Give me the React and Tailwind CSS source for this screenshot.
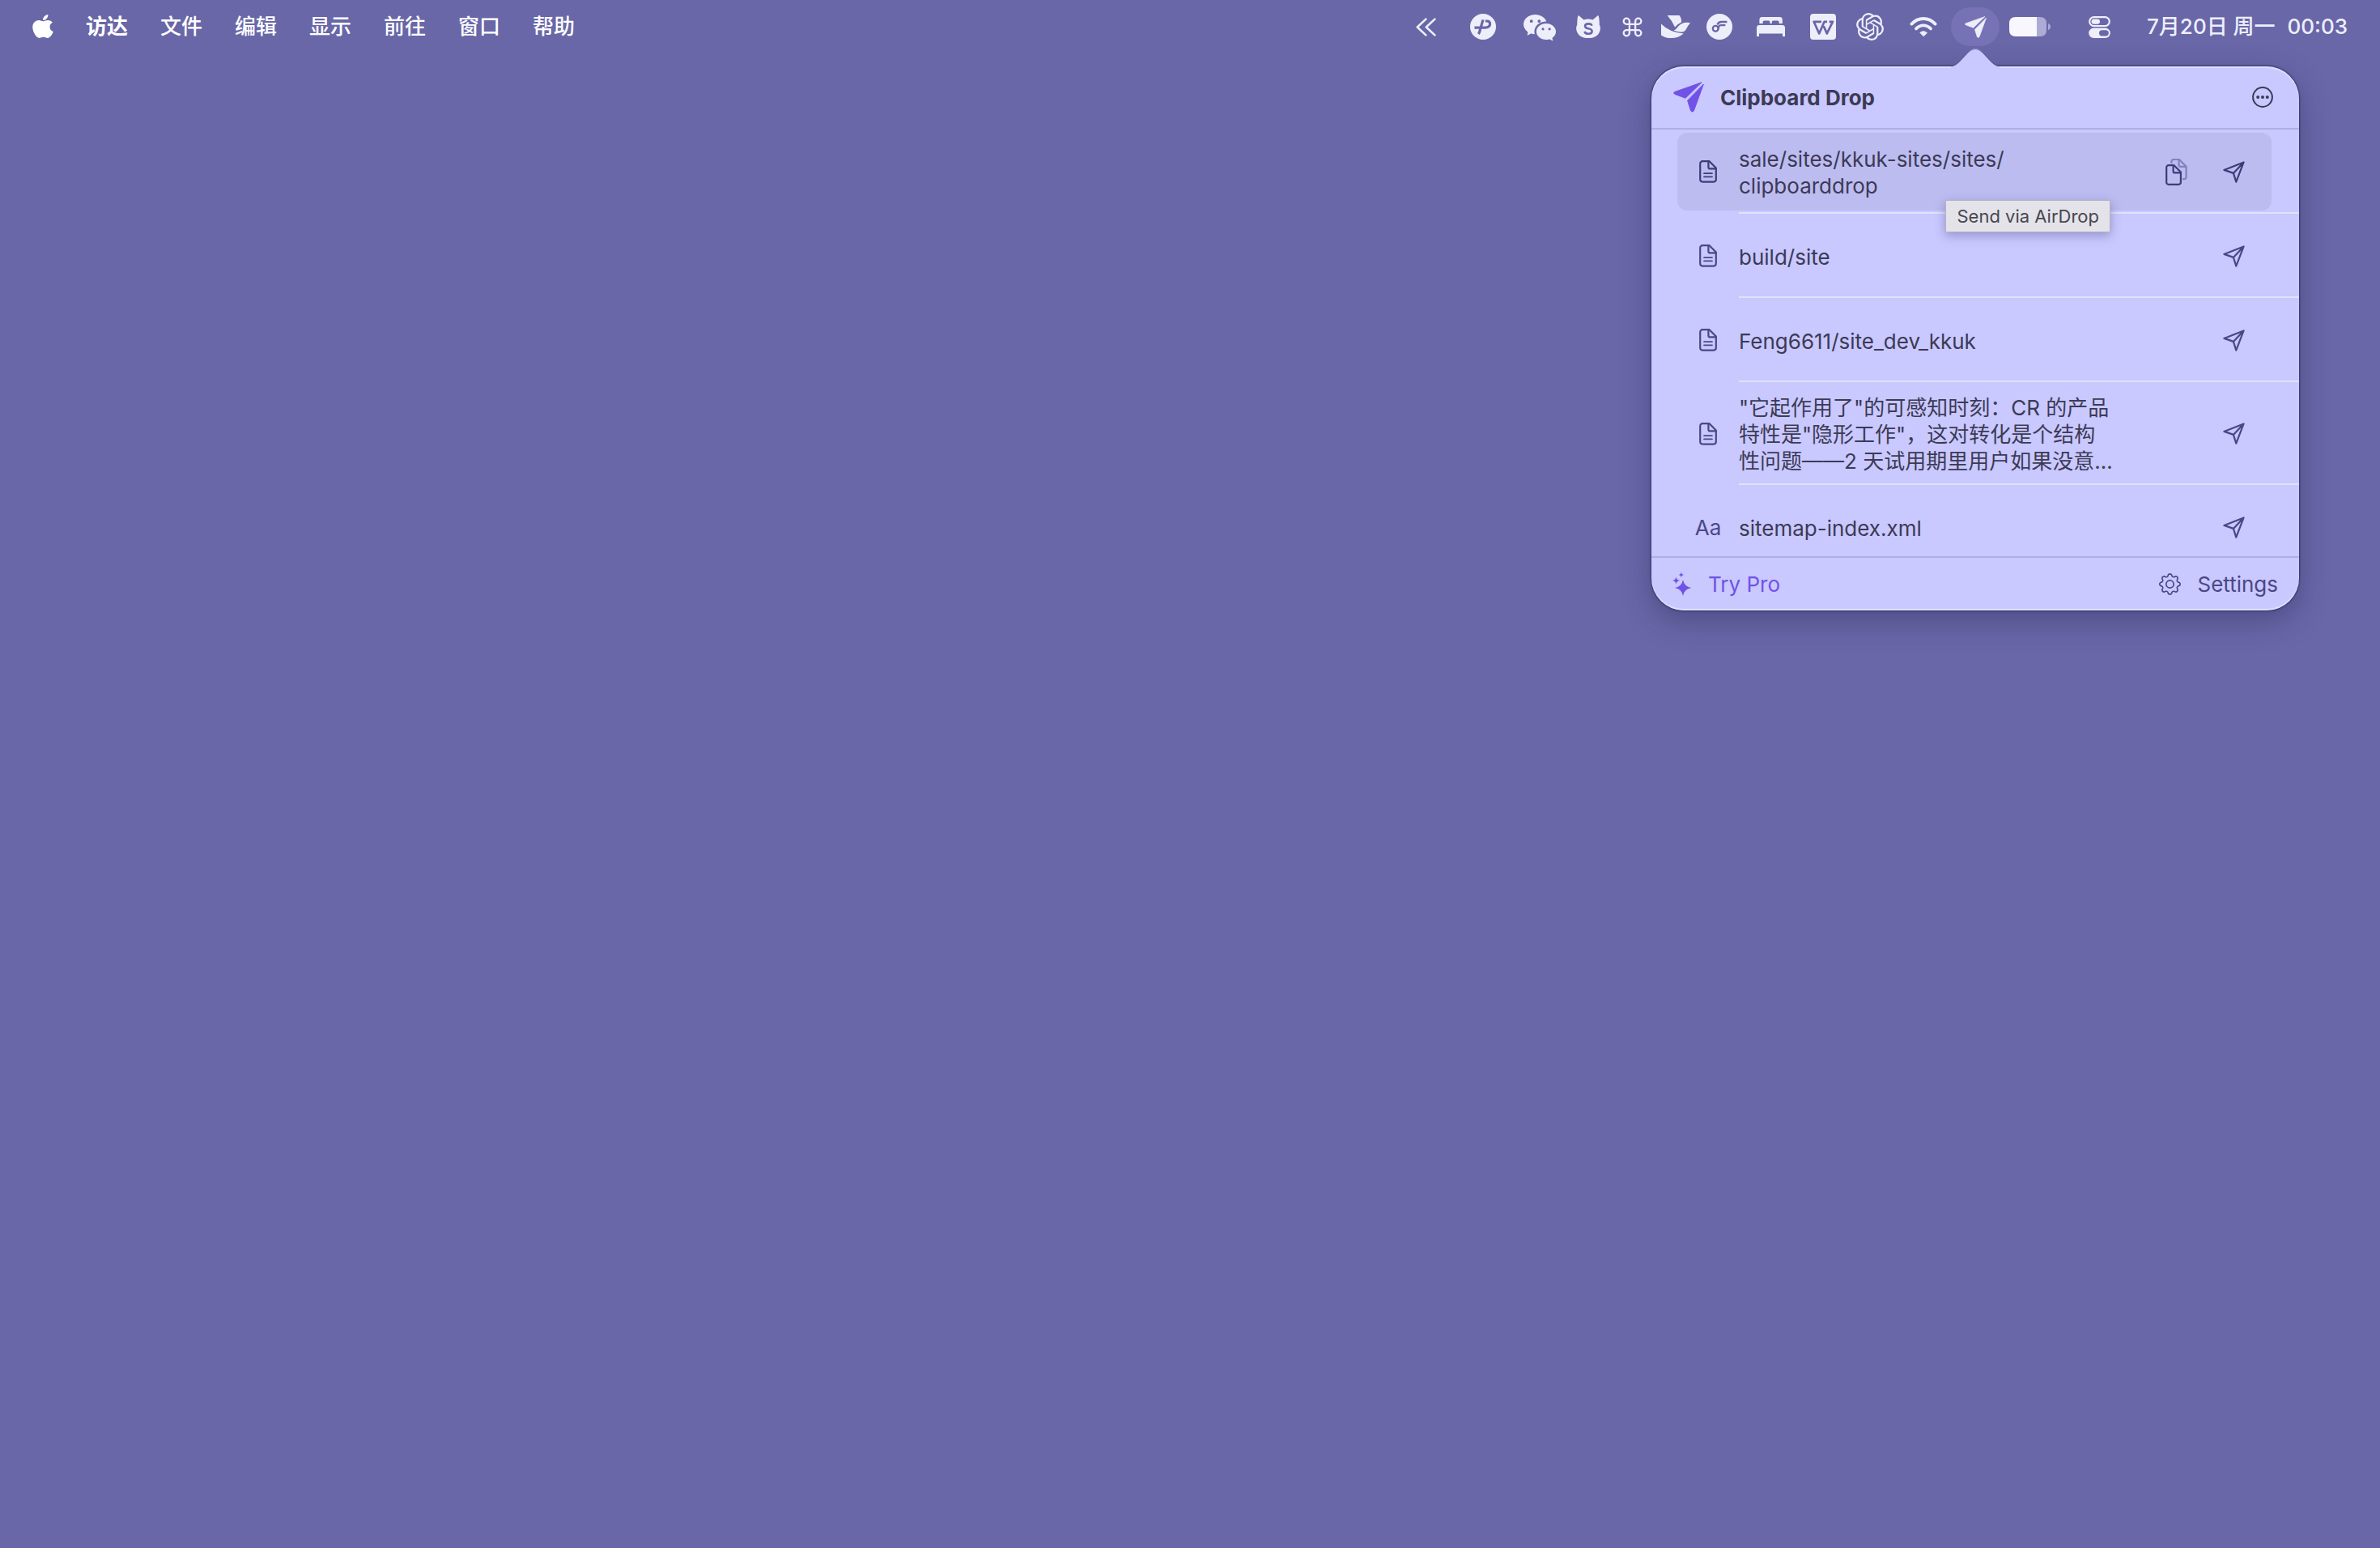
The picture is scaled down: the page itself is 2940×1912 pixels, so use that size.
import { Command } from 'lucide-react';
import { BsGear, BsWechat } from 'react-icons/bs';
import { FaApple } from 'react-icons/fa';
import { SiOpenai } from 'react-icons/si';

/* ── Icons ─────────────────────────────────────── */

const PlaneFill = ({ className }) => (
  <svg viewBox="0 0 38 38" className={className} fill="currentColor" stroke="currentColor" strokeLinejoin="round">
    <path d="M1.6 12.6 35 .8 15 20.2 1.9 15.3Q-.6 14 1.6 12.6Z" />
    <path d="M37.3 3 25.4 35.8Q23.6 38.6 21.6 35.8L17.6 23.2Z" />
  </svg>
);

const Plane = () => (
  <svg viewBox="0 0 27 27" className="w-[27px] h-[27px]" fill="none" stroke="currentColor" strokeWidth="2.2" strokeLinejoin="round">
    <path d="M1.4 10.9 25.6 1.4 16.3 25.6 12.9 14.9Z M12.9 14.9 25.6 1.4" />
  </svg>
);

const Doc = () => (
  <svg viewBox="0 0 22 28" className="w-[22px] h-7" fill="none" stroke="currentColor" strokeWidth="2.2" strokeLinecap="round" strokeLinejoin="round">
    <path d="M4.2 1.2H12.6L20.8 9.6V23.6a3 3 0 0 1-3 3H4.2a3 3 0 0 1-3-3V4.2a3 3 0 0 1 3-3Z" />
    <path d="M11.4 1.6V8.4a2 2 0 0 0 2 2H20.4" />
    <path d="M6 16.2H16M6 20.4H16" strokeWidth="1.7" />
  </svg>
);

const Copy = () => (
  <svg viewBox="0 0 27 33" className="w-[27px] h-[33px]" fill="none" stroke="currentColor" strokeWidth="2.2" strokeLinejoin="round">
    <g opacity="0.45">
      <path d="M7.4 6V3.6a2.6 2.6 0 0 1 2.6-2.6H17L25.6 9.8V22.6a2.6 2.6 0 0 1-2.6 2.6H21" />
      <path d="M16.6 1.4V7.8a2 2 0 0 0 2 2H25.2" />
    </g>
    <path d="M3.8 8.2H10.6L18.9 16.6V29.2a2.6 2.6 0 0 1-2.6 2.6H3.8a2.6 2.6 0 0 1-2.6-2.6V10.8a2.6 2.6 0 0 1 2.6-2.6Z" />
    <path d="M9.6 8.6V15.4a2 2 0 0 0 2 2H18.6" />
  </svg>
);

const More = () => (
  <svg viewBox="0 0 26 26" className="w-[26px] h-[26px]">
    <circle cx="13" cy="13" r="11.9" fill="none" stroke="currentColor" strokeWidth="2" />
    <circle cx="7.2" cy="13" r="2" fill="currentColor" />
    <circle cx="13" cy="13" r="2" fill="currentColor" />
    <circle cx="18.8" cy="13" r="2" fill="currentColor" />
  </svg>
);

const Sparkles = () => (
  <svg viewBox="0 0 24 29" className="w-6 h-[29px]" fill="currentColor">
    <path d="M13 9Q14.4 17.6 23.4 19 14.4 20.4 13 29 11.6 20.4 2.8 19 11.6 17.6 13 9Z" />
    <path d="M4.4 5.4Q5 9.4 9.2 10 5 10.6 4.4 14.6 3.8 10.6 0 10 3.8 9.4 4.4 5.4Z" />
    <path d="M10.8 0Q11.2 2.6 13.8 3 11.2 3.4 10.8 6 10.4 3.4 7.8 3 10.4 2.6 10.8 0Z" />
  </svg>
);

const Chevrons = () => (
  <svg viewBox="0 0 25 23" className="w-[25px] h-[23px]" fill="none" stroke="currentColor" strokeWidth="2.6" strokeLinecap="round" strokeLinejoin="round">
    <path d="M12.4 1.6 1.8 11.5 12.4 21.4M23.4 1.6 12.8 11.5 23.4 21.4" />
  </svg>
);

const PassLogo = () => (
  <svg viewBox="0 0 32 32" className="w-8 h-8">
    <circle cx="16" cy="16" r="16" fill="currentColor" />
    <g fill="none" stroke="#6967a8" strokeWidth="3.2" strokeLinejoin="round">
      <path d="M16 7.4 12.4 19.6Q11.8 23 10.4 25M5.4 17.2H19.2Q24.6 16.6 24.6 12.6 24.6 9 20.6 9H18.8" />
    </g>
  </svg>
);

const CatLogo = () => (
  <svg viewBox="0 0 30 28" className="w-[30px] h-7">
    <path d="M3 0 9.5 5.4Q15 3.8 20.5 5.4L27 0Q28.6 0 28.8 12 30 13 29.8 17.4 27.6 28 15 28 2.4 28 .2 17.4 0 13 1.2 12 1.4 0 3 0Z" fill="currentColor" />
    <path d="M19.4 12.8Q18.8 10.4 15.2 10.4 11 10.4 11 13.2 11 15.6 15 16.2 19.6 17 19.6 19.6 19.6 22.8 15.2 22.8 11.2 22.8 10.4 19.8" fill="none" stroke="#6967a8" strokeWidth="2.6" />
  </svg>
);

const BirdLogo = () => (
  <svg viewBox="0 0 36 28" className="w-9 h-7" fill="currentColor">
    <path d="M7.6 0H22.4Q25.4 3.6 25 8.4 21 10 17 14.6 13.6 6.6 7.6 0Z" />
    <path d="M36 9.2Q32.4 13.4 30.6 17.4 27 23 15.8 18.8 18.4 17.4 21.2 13.6 26.4 7.4 36 9.2Z" />
    <path d="M0 10.6Q10.6 21.4 27.8 22.4 21 28 12.6 28 5 28 0 24.4Z" />
  </svg>
);

const FlashLogo = () => (
  <svg viewBox="0 0 32 32" className="w-8 h-8">
    <circle cx="16" cy="16" r="16" fill="currentColor" />
    <g fill="none" stroke="#6967a8" strokeWidth="2.3">
      <circle cx="11.2" cy="18.2" r="3.4" />
      <path d="M14.6 19.4Q14.4 14.2 18 14.2H23.4M13.4 13.4Q15 10 18.4 10H25.4" />
    </g>
  </svg>
);

const Bed = () => (
  <svg viewBox="0 0 35 24" className="w-[35px] h-6" fill="currentColor">
    <path d="M3.4 8V3.4Q3.4 0 6.8 0H28.4Q31.8 0 31.8 3.4V8H27.6V6.2Q27.6 4.6 26 4.6H20.4Q18.8 4.6 18.8 6.2V8H16.4V6.2Q16.4 4.6 14.8 4.6H9.2Q7.6 4.6 7.6 6.2V8Z" />
    <path d="M0 24V13.4Q0 10 3.4 10H31.6Q35 10 35 13.4V24H32V20.6H3V24Z" />
  </svg>
);

const WpsLogo = () => (
  <svg viewBox="0 0 32 32" className="w-8 h-8">
    <rect width="32" height="32" rx="4" fill="currentColor" />
    <path d="M14 9.8H4.6L11.2 24.4 17.6 9.8H21M16.8 15.4 20.8 24.4 28 9.8H23.6" fill="none" stroke="#6967a8" strokeWidth="2.7" strokeLinejoin="round" />
  </svg>
);

const Wifi = () => (
  <svg viewBox="0 0 34 24" className="w-[34px] h-6" fill="none" stroke="currentColor" strokeWidth="3.8" strokeLinecap="round">
    <path d="M2.4 8.6Q8.6 2 17 2T31.6 8.6" />
    <path d="M8 14.4Q12 10.4 17 10.4T26 14.4" />
    <path d="M17 23.6 12.8 19.4Q17 16 21.2 19.4Z" fill="currentColor" strokeWidth="1" strokeLinejoin="round" />
  </svg>
);

const Battery = () => (
  <svg viewBox="0 0 52 24" className="w-[52px] h-6">
    <path d="M34 0H38Q46 0 46 8V16Q46 24 38 24H34Z" fill="#acabd5" />
    <path d="M34 0H8Q0 0 0 8V16Q0 24 8 24H34Z" fill="#f7f7fd" />
    <path d="M48 8Q51 9 51 12T48 16Z" fill="#acabd5" />
  </svg>
);

const ControlCenter = () => (
  <svg viewBox="0 0 27 27" className="w-[27px] h-[27px]">
    <rect x="1.2" y="1.2" width="24.6" height="10.8" rx="5.4" fill="none" stroke="currentColor" strokeWidth="2.2" />
    <rect x="3.6" y="3.4" width="10.4" height="6.4" rx="3.2" fill="currentColor" />
    <path d="M6.4 14.6H20.6A6.2 6.2 0 0 1 20.6 27H6.4A6.2 6.2 0 0 1 6.4 14.6ZM16.6 17.2A3.6 3.6 0 0 0 16.6 24.4H21.2A3.6 3.6 0 0 0 21.2 17.2Z" fill="currentColor" fillRule="evenodd" />
  </svg>
);

/* ── Data ──────────────────────────────────────── */

const menus = ['文件', '编辑', '显示', '前往', '窗口', '帮助'];

const extras = [
  { label: 'Show more', slot: 'w-[66px]', icon: <Chevrons /> },
  { label: 'Passwords', slot: 'w-[76px]', icon: <PassLogo /> },
  { label: 'WeChat', slot: 'w-16', icon: <BsWechat className="w-10 h-10" /> },
  { label: 'Cat', slot: 'w-14', icon: <CatLogo /> },
  { label: 'Command', slot: 'w-[52px]', icon: <Command className="w-[29px] h-[29px]" strokeWidth={1.9} /> },
  { label: 'Lark', slot: 'w-14', icon: <BirdLogo /> },
  { label: 'Flash', slot: 'w-[52px]', icon: <FlashLogo /> },
  { label: 'Sleep', slot: 'w-[75px]', icon: <Bed /> },
  { label: 'WPS', slot: 'w-[54px]', icon: <WpsLogo /> },
  { label: 'ChatGPT', slot: 'w-[62px]', icon: <SiOpenai className="w-[34px] h-[34px]" /> },
  { label: 'Wi-Fi', slot: 'w-[69px]', icon: <Wifi /> },
  { label: 'Clipboard Drop', slot: 'w-[60px] rounded-full bg-[#7772b6]', icon: <PlaneFill className="w-[27px] h-[27px]" /> },
  { label: 'Battery', slot: 'w-[76px]', icon: <Battery /> },
  { label: 'Control Center', slot: 'w-[94px]', icon: <ControlCenter /> },
];

const clips = [
  { kind: 'doc', text: 'sale/sites/kkuk-sites/sites/\nclipboarddrop', active: true },
  { kind: 'doc', text: 'build/site' },
  { kind: 'doc', text: 'Feng6611/site_dev_kkuk' },
  { kind: 'doc', text: '"它起作用了"的可感知时刻：CR 的产品\n特性是"隐形工作"，这对转化是个结构\n性问题——2 天试用期里用户如果没意…' },
  { kind: 'text', text: 'sitemap-index.xml' },
];

/* ── Menu bar ──────────────────────────────────── */

const MenuBar = () => (
  <header className="h-[66px] px-10 flex items-center justify-between text-[#eeeefa]">
    <nav className="flex items-center gap-10 pb-0.5 font-medium text-white">
      <button aria-label="Apple">
        <FaApple className="w-[26px] h-[33px]" preserveAspectRatio="none" />
      </button>
      <button className="font-bold">访达</button>
      {menus.map((m) => (
        <button key={m}>{m}</button>
      ))}
    </nav>

    <div className="flex items-center">
      {extras.map((e) => (
        <button key={e.label} aria-label={e.label} className={`${e.slot} h-12 flex items-center justify-center`}>
          {e.icon}
        </button>
      ))}
      <button className="w-[260px] pl-3 pb-0.5 flex justify-between font-medium whitespace-nowrap">
        <span>7月20日 周一</span>
        <span>00:03</span>
      </button>
    </div>
  </header>
);

/* ── Clip row ──────────────────────────────────── */

const ClipRow = ({ clip }) => (
  <li className={`pt-1 ${clip.active ? 'text-[#3f3b78]' : 'text-[#4b4787]'}`}>
    <div className={`relative ml-8 mr-[34px] mb-0.5 min-h-24 py-[9px] pr-[33px] rounded-xl flex items-center ${clip.active ? 'bg-[#bdbcf1]' : ''}`}>
      <div className="w-[76px] flex justify-center">
        {clip.kind === 'doc' ? <Doc /> : 'Aa'}
      </div>
      <p className="flex-1 pt-0.5 whitespace-pre text-[#3c3a55]">{clip.text}</p>
      {clip.active && (
        <button aria-label="Copy" className="mr-11">
          <Copy />
        </button>
      )}
      <button aria-label="Send via AirDrop">
        <Plane />
      </button>

      {clip.active && (
        <div
          role="tooltip"
          className="absolute z-10 top-[83px] right-[199px] h-10 px-[13px] flex items-center whitespace-nowrap bg-[#e4e3ea] border border-[#b3b2c6] text-[22px] text-[#48474f] shadow-[0_4px_12px_rgba(50,45,100,0.35)]"
        >
          Send via AirDrop
        </div>
      )}
    </div>
    <div className="ml-[108px] h-0.5 bg-[#e2e1f7]" />
  </li>
);

/* ── Popover ───────────────────────────────────── */

const Popover = () => (
  <section className="relative self-end w-[800px] mt-4 mr-[100px]">
    <div className="rounded-[40px] bg-[#c9c8ff] overflow-hidden shadow-[0_0_2px_1px_rgba(40,36,90,0.7),0_12px_36px_rgba(40,36,80,0.4)]">
      <div className="h-[78px] pl-[27px] pr-8 flex items-center border-b-2 border-[#b0afe4]">
        <PlaneFill className="w-[38px] h-[38px] text-[#7152e6]" />
        <h1 className="ml-5 flex-1 font-bold text-[#3c3a55]">Clipboard Drop</h1>
        <button aria-label="More" className="text-[#3c3a55]">
          <More />
        </button>
      </div>

      <ul className="h-[527px] overflow-hidden">
        {clips.map((c) => (
          <ClipRow key={c.text} clip={c} />
        ))}
      </ul>

      <footer className="h-[67px] pl-[26px] pr-[26px] flex items-center justify-between border-t-2 border-[#b0afe4]">
        <button className="flex items-center gap-5 text-[#7152e6]">
          <Sparkles />
          Try Pro
        </button>
        <button className="flex items-center gap-5 text-[#4b4787]">
          <BsGear className="w-[27px] h-[27px]" />
          Settings
        </button>
      </footer>
    </div>

    {/* light rim along the edge */}
    <div className="absolute inset-0 rounded-[40px] pointer-events-none shadow-[inset_0_2px_1px_rgba(255,255,255,0.45),inset_0_-2px_1px_rgba(255,255,255,0.45)]" />

    {/* arrow */}
    <svg viewBox="0 0 60 26" className="absolute left-[370px] -top-[22px] w-[60px] h-[26px]">
      <path d="M0 22Q5 22 10 17L22 4Q26 0 30 0T38 4L50 17Q55 22 60 22V26H0Z" fill="#c9c8ff" />
      <path d="M0 21.5Q5 21.5 10 16.5L22 4Q26 .5 30 .5T38 4L50 16.5Q55 21.5 60 21.5" fill="none" stroke="#4c4882" strokeOpacity="0.6" />
    </svg>
  </section>
);

const App = () => (
  <div className={`min-h-screen flex flex-col bg-[#6967a8] text-[26px] leading-[33px] font-[Inter,'Noto_Sans_CJK_SC',sans-serif]`}>
    <MenuBar />
    <Popover />
  </div>
);

export default App;
